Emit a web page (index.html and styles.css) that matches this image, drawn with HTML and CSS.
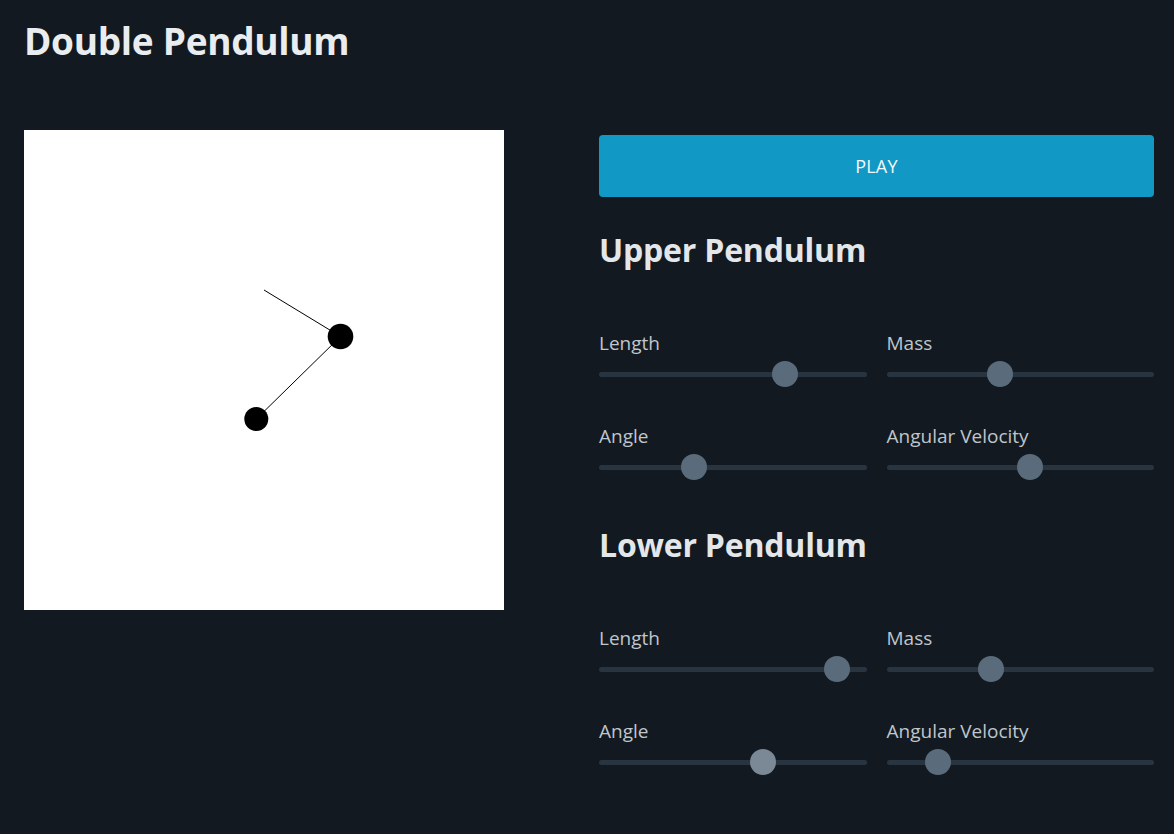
FILE: index.html
```html
<!DOCTYPE html>
<html lang="en">
<head>
<meta charset="utf-8">
<title>Double Pendulum</title>
<link rel="stylesheet" href="styles.css">
</head>
<body>
<h1 class="page-title">Double Pendulum</h1>
<main class="layout">
  <section class="stage">
    <div class="canvas">
      <svg width="480" height="480" viewBox="0 0 480 480">
        <line x1="240" y1="160" x2="316.5" y2="206.5" stroke="#000" stroke-width="1"/>
        <line x1="316.5" y1="206.5" x2="232.3" y2="289" stroke="#000" stroke-width="1"/>
        <circle cx="316.5" cy="206.5" r="12.8" fill="#000"/>
        <circle cx="232.3" cy="289" r="12" fill="#000"/>
      </svg>
    </div>
  </section>
  <section class="controls">
    <button class="play-btn">PLAY</button>

    <h2 class="group-title">Upper Pendulum</h2>
    <div class="slider-grid">
      <div class="field">
        <label class="field-label">Length</label>
        <div class="slider"><div class="track"></div><div class="thumb" style="--v:0.715"></div></div>
      </div>
      <div class="field">
        <label class="field-label">Mass</label>
        <div class="slider"><div class="track"></div><div class="thumb" style="--v:0.415"></div></div>
      </div>
      <div class="field">
        <label class="field-label">Angle</label>
        <div class="slider"><div class="track"></div><div class="thumb" style="--v:0.339"></div></div>
      </div>
      <div class="field">
        <label class="field-label">Angular Velocity</label>
        <div class="slider"><div class="track"></div><div class="thumb" style="--v:0.539"></div></div>
      </div>
    </div>

    <h2 class="group-title">Lower Pendulum</h2>
    <div class="slider-grid">
      <div class="field">
        <label class="field-label">Length</label>
        <div class="slider"><div class="track"></div><div class="thumb" style="--v:0.93"></div></div>
      </div>
      <div class="field">
        <label class="field-label">Mass</label>
        <div class="slider"><div class="track"></div><div class="thumb" style="--v:0.38"></div></div>
      </div>
      <div class="field">
        <label class="field-label">Angle</label>
        <div class="slider"><div class="track"></div><div class="thumb thumb-active" style="--v:0.624"></div></div>
      </div>
      <div class="field">
        <label class="field-label">Angular Velocity</label>
        <div class="slider"><div class="track"></div><div class="thumb" style="--v:0.16"></div></div>
      </div>
    </div>
  </section>
</main>
</body>
</html>
```

FILE: styles.css
```css
* { box-sizing: border-box; }

html, body {
  margin: 0;
  padding: 0;
  background: #131920;
  height: 100%;
}

body {
  font-family: "Open Sans", "Noto Sans", sans-serif;
  color: #e6eaee;
  padding: 0 20px 0 24px;
}

.page-title {
  margin: 0;
  padding-top: 17px;
  font-size: 37px;
  line-height: 48px;
  font-weight: 700;
  color: #e9edf0;
  letter-spacing: -0.3px;
}

.layout {
  display: grid;
  grid-template-columns: 555px 555px;
  column-gap: 20px;
  margin-top: 65px;
}

.canvas {
  width: 480px;
  height: 480px;
  background: #ffffff;
}

.canvas svg { display: block; }

.controls {
  padding-top: 5px;
}

.play-btn {
  display: block;
  width: 100%;
  height: 62px;
  border: 0;
  border-radius: 4px;
  background: #1198c4;
  color: #f4f8fb;
  font-family: "Open Sans", "Noto Sans", sans-serif;
  font-size: 18px;
  font-weight: 400;
  letter-spacing: 0.2px;
}

.group-title {
  margin: 31px 0 0;
  font-size: 32px;
  line-height: 44px;
  font-weight: 700;
  color: #e3e7ea;
  letter-spacing: -0.2px;
}

.slider-grid + .group-title {
  margin-top: 43px;
}

.slider-grid {
  display: grid;
  grid-template-columns: 1fr 1fr;
  column-gap: 20px;
  row-gap: 36px;
  margin-top: 58px;
}

.field {
  display: flex;
  flex-direction: column;
  gap: 5px;
}

.field-label {
  font-size: 19px;
  line-height: 26px;
  color: #bfc6cc;
}

.slider {
  position: relative;
  height: 26px;
}

.track {
  position: absolute;
  left: 0;
  right: 0;
  top: 10.5px;
  height: 5px;
  border-radius: 3px;
  background: #283541;
}

.thumb {
  position: absolute;
  top: 0;
  left: calc(var(--v) * (100% - 26px));
  width: 26px;
  height: 26px;
  border-radius: 50%;
  background: #5a6c7c;
}

.thumb-active {
  background: #7b8996;
}
```
